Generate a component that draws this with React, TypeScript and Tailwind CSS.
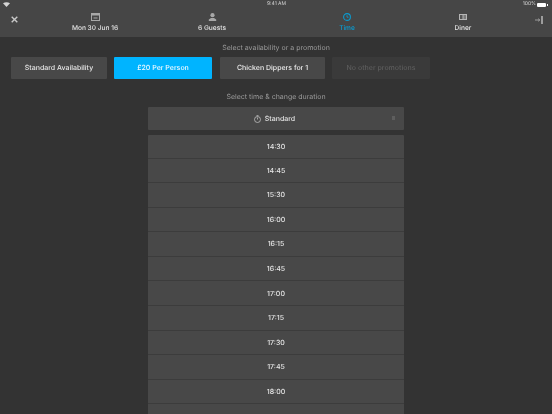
import React from "react";

const font = { fontFamily: "Inter, sans-serif" };
const times = ["14:30","14:45","15:30","16:00","16:15","16:45","17:00","17:15","17:30","17:45","18:00",""];

function Tab({ icon, label, active, cls }: { icon: React.ReactNode; label: string; active?: boolean; cls: string }) {
  return (
    <div className={`flex flex-col items-center gap-[2px] ${cls}`}>
      {icon}
      <span className={`text-[6.6px] leading-[10px] font-medium ${active ? "text-[#0a9bd0]" : "text-[#e4e4e4]"}`}>{label}</span>
    </div>
  );
}

export default function App() {
  return (
    <div className="w-[552px] h-[414px] overflow-hidden bg-[#333333] flex flex-col antialiased [text-rendering:geometricPrecision] will-change-transform" style={font}>
      <header className="h-[37px] shrink-0 bg-[#464646] relative flex flex-col">
        <div className="h-[9px] flex items-center justify-between pl-[3px] pr-[4px] text-[5px] text-[#d5d5d5] relative">
          <svg width="7" height="5" viewBox="0 0 7 5"><path d="M0 1.2Q3.5-.8 7 1.2L3.5 5Z" fill="#d5d5d5" /></svg>
          <span className="absolute left-[267px] top-[1px] leading-[7px]">9:41 AM</span>
          <div className="flex items-center gap-[1px]">
            <span>100%</span>
            <div className="w-[9px] h-[4px] bg-white rounded-[1px]" />
            <div className="w-[1px] h-[2px] bg-white" />
          </div>
        </div>
        <div className="flex-1 relative">
          <svg className="absolute left-[11px] top-[7px]" width="7" height="7" viewBox="0 0 7 7"><path d="M.7.7l5.6 5.6M6.3.7L.7 6.3" stroke="#c9c9c9" strokeWidth="1.4" /></svg>
          <Tab cls="absolute left-[55px] w-[80px] top-[4px]" label="Mon 30 Jun 16" icon={
            <svg width="9" height="8" viewBox="0 0 9 8"><rect x=".5" y=".5" width="8" height="7" fill="none" stroke="#a8a8a8" /><rect x="1" y="1" width="7" height="1.5" fill="#a8a8a8" /><rect x="2.5" y="4" width="4" height="2" fill="#777" /></svg>
          } />
          <Tab cls="absolute left-[172px] w-[80px] top-[4px]" label="6 Guests" icon={
            <svg width="9" height="8" viewBox="0 0 9 8"><circle cx="4.5" cy="2.2" r="2.1" fill="#a8a8a8" /><path d="M.8 8V6.6L3 4.9h3l2.2 1.7V8Z" fill="#a8a8a8" /></svg>
          } />
          <Tab cls="absolute left-[307px] w-[80px] top-[4px]" label="Time" active icon={
            <svg width="8" height="8" viewBox="0 0 8 8" fill="none" stroke="#0a9bd0"><circle cx="4" cy="4" r="3.4" strokeWidth="1.1" /><path d="M4 2.2v2h1.5" strokeWidth=".9" /></svg>
          } />
          <Tab cls="absolute left-[423px] w-[80px] top-[4px]" label="Diner" icon={
            <svg width="8" height="8" viewBox="0 0 8 8"><rect x="0" y="1" width="8" height="6" fill="#b5b5b5" /><rect x="1" y="2" width="2.5" height="4" fill="#555" /><rect x="4.5" y="2" width="2.5" height="4" fill="#7a7a7a" /></svg>
          } />
          <svg className="absolute left-[535px] top-[7px]" width="8" height="8" viewBox="0 0 8 8" fill="none"><path d="M0 4h4.6M3.2 2.7L4.8 4 3.2 5.3" stroke="#b0b0b0" strokeWidth=".8" /><path d="M7 0v8" stroke="#d8d8d8" strokeWidth="1.2" /></svg>
        </div>
      </header>

      <main className="flex-1 flex flex-col items-center min-h-0">
        <p className="mt-[5.5px] text-[7px] leading-[10px] text-[#9a9a9a]">Select availability or a promotion</p>
        <div className="self-start ml-[11px] mt-[4.5px] flex text-[7px] font-medium">
          <div className="w-[96px] h-[22px] rounded-[1px] bg-[#484848] text-[#e6e6e6] flex items-center justify-center">Standard Availability</div>
          <div className="ml-[7px] w-[98px] h-[22px] rounded-[1px] bg-[#00b4ff] text-[#f0faff] flex items-center justify-center">£20 Per Person</div>
          <div className="ml-[8px] w-[105px] h-[22px] rounded-[1px] bg-[#484848] text-[#ececec] flex items-center justify-center">Chicken Dippers for 1</div>
          <div className="ml-[7px] w-[98px] h-[22px] rounded-[1px] bg-[#3a3a3a] text-[#5c5c5c] flex items-center justify-center">No other promotions</div>
        </div>
        <p className="mt-[13px] text-[7px] leading-[10px] text-[#9a9a9a]">Select time &amp; change duration</p>
        <div className="mt-[5px] w-[256px] h-[23px] shrink-0 rounded-[1px] bg-[#484848] relative flex items-center justify-center gap-[4px] pr-[3px] pt-[1px] text-[7px] font-medium text-[#e4e4e4]">
          <svg width="7" height="8" viewBox="0 0 7 8" fill="none" stroke="#d0d0d0" strokeWidth=".7"><circle cx="3.5" cy="4.5" r="3" /><path d="M3.5 4.5V2.5M2.5.6h2" /></svg>
          <span>Standard</span>
          <div className="absolute right-[9px] top-[9px] w-[3px] h-[4px] bg-[#5e5e5e]" />
        </div>
        <div className="mt-[5px] w-[256px] rounded-t-[1px] bg-[#484848] flex flex-col shrink-0">
          {times.map((t, i) => (
            <div key={i} className={`${i === 0 ? "h-[23.5px]" : "h-[24.6px]"} shrink-0 border-b border-[#3c3c3c] pt-[1px] flex items-center justify-center text-[7px] font-medium text-[#e8e8e8]`}>{t}</div>
          ))}
        </div>
      </main>
    </div>
  );
}
